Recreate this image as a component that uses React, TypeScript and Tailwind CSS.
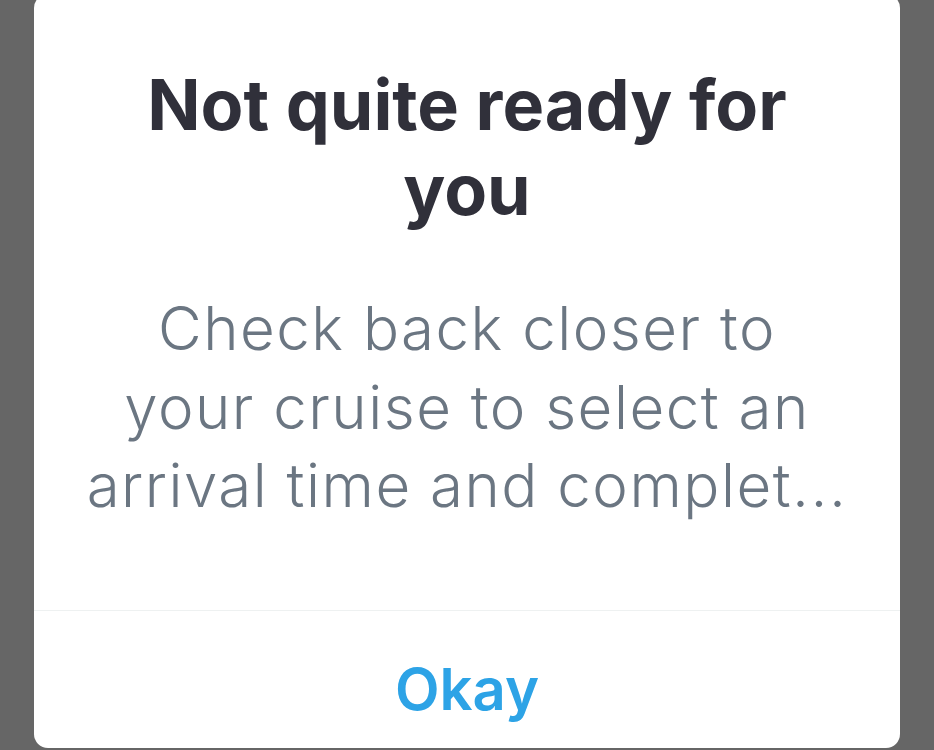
export default function App() {
  return (
    <div className="h-[750px] w-[934px] overflow-hidden bg-[#666666] pl-[34px]">
      <div
        className="-mt-[6px] flex h-[754px] w-[866px] flex-col rounded-[14px] bg-white"
        style={{ fontFamily: 'Inter, "Open Sans", sans-serif' }}
      >
        <div className="flex flex-1 flex-col items-center pt-[68px] text-center">
          <h1 className="whitespace-nowrap text-[70px] font-bold leading-[85px] text-[#30303a]">
            Not quite ready for
            <br />
            you
          </h1>
          <p className="mt-[57px] whitespace-nowrap text-[60px] font-light leading-[78.5px] tracking-[1.5px] text-[#6b7682]">
            Check back closer to
            <br />
            your cruise to select an
            <br />
            arrival time and complet...
          </p>
        </div>
        <div className="h-px bg-[#eef1f1]" />
        <button className="block h-[137px] w-full pt-[18px] text-center text-[58px] font-semibold leading-[58px] text-[#2da3e6]">
          Okay
        </button>
      </div>
    </div>
  )
}
